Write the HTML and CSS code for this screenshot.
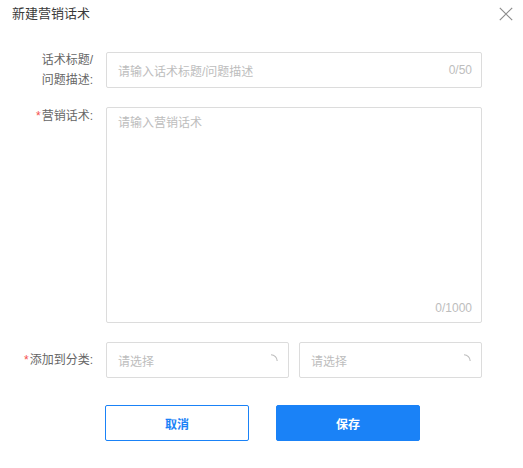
FILE: index.html
```html
<!DOCTYPE html>
<html lang="zh-CN">
<head>
<meta charset="utf-8">
<title>新建营销话术</title>
<link rel="stylesheet" href="styles.css">
</head>
<body>
<div class="dialog">
  <div class="header">
    <span class="title">新建营销话术</span>
    <span class="close" aria-label="关闭">
      <svg width="14" height="14" viewBox="0 0 14 14"><path d="M0.8 0.8 L13.2 13.2 M13.2 0.8 L0.8 13.2" stroke="#8c8c8c" stroke-width="1.2" fill="none"/></svg>
    </span>
  </div>
  <div class="form">
    <div class="row row-center">
      <div class="label label-two">话术标题/<br>问题描述:</div>
      <div class="field input">
        <span class="ph">请输入话术标题/问题描述</span>
        <span class="count">0/50</span>
      </div>
    </div>
    <div class="row">
      <div class="label label-top"><span class="req">*</span>营销话术:</div>
      <div class="field textarea">
        <span class="ph">请输入营销话术</span>
        <span class="count count-bottom">0/1000</span>
      </div>
    </div>
    <div class="row row-center">
      <div class="label"><span class="req">*</span>添加到分类:</div>
      <div class="selects">
        <div class="field select">
          <span class="ph">请选择</span>
          <svg class="spin" width="14" height="14" viewBox="0 0 14 14"><path d="M7 0.8 A6.2 6.2 0 0 1 13.2 7" stroke="#bdbdbd" stroke-width="1.1" fill="none"/></svg>
        </div>
        <div class="field select">
          <span class="ph">请选择</span>
          <svg class="spin" width="14" height="14" viewBox="0 0 14 14"><path d="M7 0.8 A6.2 6.2 0 0 1 13.2 7" stroke="#bdbdbd" stroke-width="1.1" fill="none"/></svg>
        </div>
      </div>
    </div>
  </div>
  <div class="actions">
    <button class="btn btn-cancel">取消</button>
    <button class="btn btn-save">保存</button>
  </div>
</div>
</body>
</html>
```

FILE: styles.css
```css
* { box-sizing: border-box; }
html, body {
  margin: 0;
  padding: 0;
  background: #fff;
}
body {
  font-family: "Helvetica Neue", "Liberation Sans", "Noto Sans CJK SC", sans-serif;
  font-size: 12px;
  color: #666;
  width: 523px;
  height: 468px;
  overflow: hidden;
}
.dialog {
  width: 523px;
}
.header {
  height: 52px;
  display: flex;
  justify-content: space-between;
  align-items: flex-start;
  padding: 6px 10px 0 12px;
}
.title {
  font-size: 13px;
  line-height: 16px;
  color: #3a3a3a;
}
.close {
  display: block;
  width: 14px;
  height: 14px;
  margin-top: 1px;
}
.close svg { display: block; }
.form {
  display: flex;
  flex-direction: column;
  gap: 19px;
}
.row {
  display: flex;
  align-items: flex-start;
  gap: 13px;
}
.row-center { align-items: center; }
.label {
  width: 93px;
  flex: none;
  text-align: right;
  color: #666;
  font-size: 12px;
  line-height: 18px;
}
.label-two {
  line-height: 20.5px;
  margin: -2.5px 0;
}
.req {
  color: #f5504e;
  margin-right: 1px;
}
.field {
  position: relative;
  border: 1px solid #dcdcdc;
  border-radius: 2px;
  background: #fff;
  color: #bdbdbd;
  font-size: 12px;
}
.input {
  width: 376px;
  height: 36px;
  display: flex;
  align-items: center;
  padding: 0 11px;
}
.textarea {
  width: 376px;
  height: 216px;
  padding: 6px 11px;
  line-height: 18px;
}
.count {
  position: absolute;
  right: 9px;
  top: 50%;
  transform: translateY(-50%);
  color: #bdbdbd;
  font-size: 12px;
}
.count-bottom {
  top: auto;
  bottom: 5px;
  transform: none;
}
.selects {
  display: flex;
  gap: 10px;
}
.select {
  width: 183px;
  height: 36px;
  display: flex;
  align-items: center;
  justify-content: space-between;
  padding: 0 10px 0 11px;
}
.spin {
  display: block;
  margin-top: 1px;
}
.actions {
  display: flex;
  gap: 27px;
  padding-left: 105px;
  margin-top: 27px;
}
.btn {
  width: 144px;
  height: 36px;
  border-radius: 2px;
  font-family: inherit;
  font-size: 12px;
  font-weight: 700;
  cursor: pointer;
  padding: 0;
}
.btn-cancel {
  background: #fff;
  border: 1px solid #1a82f7;
  color: #1a82f7;
}
.btn-save {
  background: #1a82f7;
  border: 1px solid #1a82f7;
  color: #fff;
}
```
